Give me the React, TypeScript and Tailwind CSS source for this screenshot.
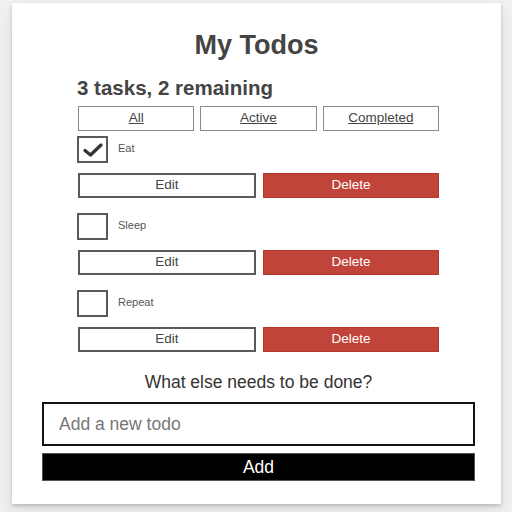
import { useState } from "react";

type Todo = { id: string; name: string; completed: boolean };

const initialTodos: Todo[] = [
  { id: "todo-0", name: "Eat", completed: true },
  { id: "todo-1", name: "Sleep", completed: false },
  { id: "todo-2", name: "Repeat", completed: false },
];

function TodoItem({ todo, onToggle }: { todo: Todo; onToggle: () => void }) {
  return (
    <li className="flex flex-col">
      <div className="flex items-center h-[27px]">
        <button
          type="button"
          onClick={onToggle}
          className="w-[31px] h-[27px] border-2 border-[#5a5a5a] bg-white flex items-center justify-center"
        >
          {todo.completed && (
            <svg width="20" height="14" viewBox="0 0 20 14">
              <path
                d="M2 7.5 L7.5 12 L18 2"
                fill="none"
                stroke="#333"
                strokeWidth="3.2"
                strokeLinecap="round"
                strokeLinejoin="round"
              />
            </svg>
          )}
        </button>
        <label className="ml-[10px] text-[11px] text-[#555] -mt-[3px]">{todo.name}</label>
      </div>
      <div className="flex gap-[7px] mt-[10px] ml-[1px]">
        <button
          type="button"
          className="flex-1 h-[25px] border-2 border-[#5a5a5a] bg-white text-[13.5px] text-[#444]"
        >
          Edit
        </button>
        <button
          type="button"
          className="flex-1 h-[25px] border border-[#b8362c] bg-[#c1443a] text-[13.5px] text-white"
        >
          Delete
        </button>
      </div>
    </li>
  );
}

export default function App() {
  const [todos, setTodos] = useState(initialTodos);
  const [name, setName] = useState("");

  const remaining = todos.filter((t) => !t.completed).length;

  return (
    <div
      className="w-[512px] h-[512px] bg-[#f0f0f0] pt-[3px] pl-[12px] overflow-hidden"
      style={{ fontFamily: '"Liberation Sans", Arial, sans-serif' }}
    >
      <div className="w-[489px] h-[501px] bg-white shadow-[0_2px_4px_0_rgba(0,0,0,0.2),0_10px_20px_0_rgba(0,0,0,0.06)] flex flex-col items-center">
        <h1 className="mt-[27px] text-[27px] leading-[30px] font-bold text-[#444]">My Todos</h1>

        <div className="w-[362px] mt-[16px] self-start ml-[65px]">
          <h2 className="text-[20.5px] leading-[24px] font-bold text-[#444]">
            {todos.length} tasks, {remaining} remaining
          </h2>

          <div className="flex gap-[6px] mt-[6px] ml-[1px]">
            {["All", "Active", "Completed"].map((f) => (
              <button
                key={f}
                type="button"
                className="flex-1 h-[25px] border border-[#8a8a8a] bg-white text-[13.5px] text-[#444] underline"
              >
                {f}
              </button>
            ))}
          </div>

          <ul className="flex flex-col gap-[15px] mt-[5px]">
            {todos.map((t) => (
              <TodoItem
                key={t.id}
                todo={t}
                onToggle={() =>
                  setTodos(todos.map((x) => (x.id === t.id ? { ...x, completed: !x.completed } : x)))
                }
              />
            ))}
          </ul>
        </div>

        <form
          className="w-[433px] mt-[20px] self-start ml-[30px] flex flex-col"
          onSubmit={(e) => {
            e.preventDefault();
            if (!name.trim()) return;
            setTodos([...todos, { id: "todo-" + Date.now(), name, completed: false }]);
            setName("");
          }}
        >
          <label className="text-center text-[17.5px] leading-[20px] text-[#333]">
            What else needs to be done?
          </label>
          <input
            type="text"
            value={name}
            onChange={(e) => setName(e.target.value)}
            placeholder="Add a new todo"
            className="mt-[10px] h-[44px] border-2 border-[#111] px-[15px] text-[17.5px] text-[#333] placeholder:text-[#777] outline-none"
          />
          <button type="submit" className="mt-[7px] h-[28px] bg-black text-white text-[17.5px] border border-[#555]">
            Add
          </button>
        </form>
      </div>
    </div>
  );
}
